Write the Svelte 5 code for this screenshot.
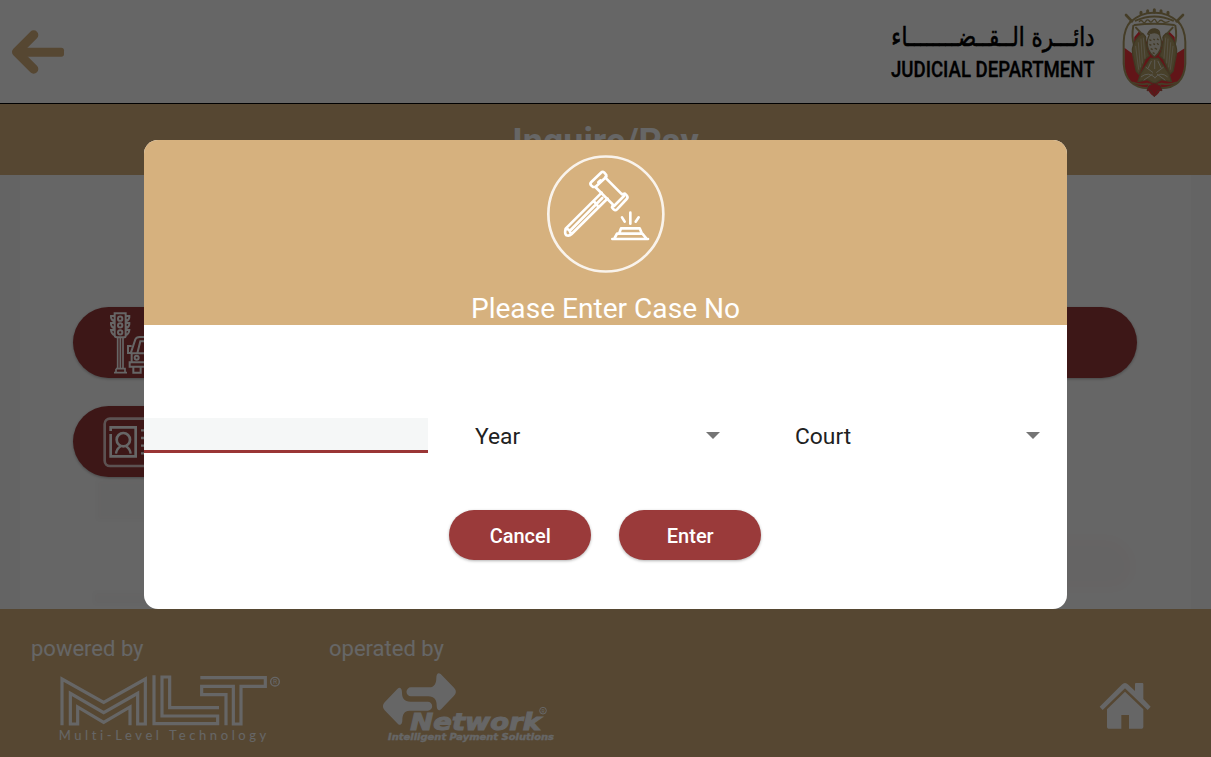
<script>
  let caseNo = $state('');
</script>

<div class="screen">
  <header class="top">
    <svg class="back" viewBox="30 85 170 145" aria-label="Back">
      <path d="M101 106 L50 157 L101 208" fill="none" stroke="#d6b17e" stroke-width="28" stroke-linecap="round" stroke-linejoin="round" />
      <path d="M54 144 H184 Q192 144 192 152 V163 Q192 171 184 171 H54Z" fill="#d6b17e" />
    </svg>
    <div class="brand">
      <svg class="wordmark" viewBox="50 60 640 185">
        <text class="ar" transform="translate(0 138) scale(1 1.180)" x="368" y="0" text-anchor="middle" direction="rtl" textLength="610" lengthAdjust="spacingAndGlyphs">دائـــرة الــقــضــــــــاء</text>
        <text class="en" x="62" y="230" textLength="611" lengthAdjust="spacingAndGlyphs">JUDICIAL DEPARTMENT</text>
      </svg>
      <svg class="emblem" viewBox="750 20 205 275">
        <path d="M762 80 V190 C764 238 790 264 825 266 L834 264 Q834 280 853 290 Q872 280 874 264 L884 266 C920 262 943 236 945 190 V80 Q925 42 853 40 Q782 42 762 80Z" fill="#fff" />
        <path d="M763 142 L790 162 L793 110 L808 92 L835 124 H872 L896 92 L914 110 L918 160 L944 144 V192 C942 238 918 260 886 262 L872 264 Q870 280 853 289 Q836 280 834 264 L820 262 C786 258 766 234 763 192Z" fill="#f4363e" />
        <path d="M800 80 L853 68 L906 80 L876 124 H830Z" fill="#fff" />
        <g fill="none" stroke="#ad9a63" stroke-width="6" stroke-linecap="round" stroke-linejoin="round">
          <path d="M783 62 Q762 84 761 125 V190 C764 240 792 263 833 264 L840 252 M923 62 Q945 84 946 125 V190 C943 240 916 263 873 264 L866 252" />
          <path d="M768 44 L786 63 M939 44 L920 63" stroke-width="8" />
          <path d="M780 66 Q812 36 853 37 Q894 36 926 66 M794 74 Q853 66 912 74 M797 61 Q853 36 909 61" />
          <path d="M813 36 v5 M833 31 v5 M853 28 v8 M873 31 v5 M894 36 v5" stroke-width="9" />
          <path d="M808 64 q5 -7 10 0 t10 -2 q5 -7 10 0 t10 -1 q6 -8 10 1 t10 0 q5 -5 11 1 t18 0" stroke-width="4" />
          <path d="M790 76 Q784 110 792 134 M916 76 Q922 110 914 134 M798 82 L826 112 M908 82 L880 112" />
        </g>
        <g fill="#b3a06a" stroke="#a08c59" stroke-width="4" stroke-linejoin="round">
          <path d="M826 108 L818 99 Q804 106 792 128 Q785 145 788 162 L799 213 L807 222 L826 176 L838 166 Q828 148 826 108Z" />
          <path d="M880 108 L889 99 Q903 106 914 128 Q922 145 919 162 L909 213 L900 222 L880 176 L869 166 Q879 148 880 108Z" />
          <path d="M842 174 H865 L897 220 L904 244 L874 238 L854 250 L832 238 L804 244 L812 220Z" />
        </g>
        <path d="M833 101 Q840 85 855 86 Q870 88 869 103 L874 121 Q878 151 853 170 Q828 150 832 120 L838 103Z" fill="#e4dfce" stroke="#a08c59" stroke-width="4" />
        <path d="M834 99 Q842 84 857 86 Q869 90 868 105 Q857 95 843 101Z" fill="#a08c59" />
        <g fill="none" stroke="#e4dfce" stroke-width="3" stroke-linecap="round">
          <path d="M797 138 L806 207 M805 127 L811 200 M813 116 L817 188 M820 113 L825 174 M909 138 L901 207 M902 127 L896 200 M894 116 L890 188 M887 113 L882 174" opacity=".65" />
          <path d="M828 201 L848 216 M880 201 L860 216 M814 229 Q836 212 855 232 M892 229 Q872 212 855 232 M822 239 L847 222 M885 239 L862 222 M844 183 L835 202 M864 183 L873 202 M854 180 V205" />
        </g>
        <path d="M838 118 l6 3 m6 -5 l5 3 m6 -4 l5 4 M838 132 l6 3 m6 -5 l5 3 m6 -4 l5 4 M842 145 l6 3 m6 -5 l7 4 M848 157 l6 3" fill="none" stroke="#a08c59" stroke-width="4" />
        <path d="M787 246 Q810 255 832 250 Q853 258 875 250 Q898 255 920 246" fill="none" stroke="#ad9a63" stroke-width="5" />
        <path d="M836 257 L853 249 L871 257 L876 271 L863 270 L853 289 L844 271 L831 271Z" fill="#ee343c" stroke="#b45a47" stroke-width="3" />
      </svg>
    </div>
  </header>

  <div class="title-band">Inquire/Pay</div>

  <main>
    <div class="panel">
      <div class="services">
        <div class="service">
          <svg class="traffic" viewBox="320 60 180 195" fill="none" stroke="#fff" stroke-width="6">
            <path d="M343 70 H376 V138 Q376 142 370 142 H350 Q343 142 343 136Z M343 78 H332 Q331 90 343 94 M343 99 H332 Q331 111 343 115 M343 120 H332 Q333 132 343 136 M376 78 H387 Q388 90 376 94 M376 99 H387 Q388 111 376 115 M376 120 H387 Q386 132 376 136" />
            <circle cx="359.500" cy="86" r="6.500" /><circle cx="359.500" cy="106" r="6.500" /><circle cx="359.500" cy="127" r="6.500" />
            <path d="M352 142 V235 M360 142 V235 M368 142 V235 M347 236 H374 V245 M347 236 V245 M341 248 H380" stroke-width="5" />
            <path d="M391 190 L405 148 Q408 141 418 141 H460 Q468 141 472 148 L487 190 M411 190 L420 154 H458 L468 190 M394 168 H383 V189 H394 M484 168 H495 V189 H484 M394 190 H484 V217 H394Z M388 217 H490 V230 H388Z M399 230 V248 H421 V230 M456 230 V248 H479 V230" />
            <circle cx="409" cy="203" r="6" /><circle cx="468" cy="203" r="6" />
          </svg>
        </div>
        <div class="service"></div>
        <div class="service">
          <svg class="idcard" viewBox="300 375 200 165" fill="none" stroke="#fff">
            <rect x="314" y="386" width="178" height="142" rx="16" stroke-width="8" opacity=".75" />
            <path d="M332 423 V412 H407 V499 H332 V432" stroke-width="8" />
            <circle cx="370" cy="449" r="20" stroke-width="8" />
            <path d="M348 491 Q350 476 362 469 M392 491 Q390 476 378 469 M423 421 H470 M423 444 H470 M423 467 H470 M423 490 H470" stroke-width="7" />
          </svg>
        </div>
      </div>
      <span class="ghost one"></span>
      <span class="ghost two"></span>
      <span class="ghost three"></span>
    </div>
  </main>

  <footer>
    <div class="credit powered">
      <span>powered by</span>
      <svg class="mlt" viewBox="170 215 690 220" fill="none" stroke="#fff">
        <g stroke-width="9.500">
          <path d="M188 375 V236 L313 306 L438 236 V371 H415 V279 L313 337 L213 279 V371 H235 V320 L313 366 L392 320 V375" />
          <path d="M464 225 V370 H655 V347 H488 V230 H511 V322 H659" />
          <path d="M603 232 H798 V258 H725 V371 H702 V258 H607 V283 H680 V375" />
        </g>
        <circle cx="827" cy="244" r="13" stroke-width="4" />
        <text x="827" y="251" font-size="20" text-anchor="middle" class="fill">R</text>
        <text x="178" y="418" font-size="39" textLength="623" class="fill geo">Multi-Level Technology</text>
      </svg>
    </div>
    <div class="credit operated">
      <span>operated by</span>
      <svg class="network" viewBox="210 215 530 220" fill="#fff">
        <path id="arrow" d="M303 264 H358 C373 264 379 252 379 236 C379 223 385 218 392 224 L432 265 Q443 277 432 289 L394 329 C385 338 380 330 380 318 C380 302 373 291 355 291 H303 A13.500 13.500 0 0 1 303 264Z" />
        <use href="#arrow" transform="rotate(180 328 299)" />
        <text x="301" y="393" font-size="69" textLength="392" lengthAdjust="spacingAndGlyphs" class="net">Network</text>
        <text x="234" y="423" font-size="25" textLength="498" lengthAdjust="spacingAndGlyphs" class="tag">Intelligent Payment Solutions</text>
        <circle cx="699" cy="334" r="10" fill="none" stroke="#fff" stroke-width="3" />
        <text x="699" y="340" font-size="15" text-anchor="middle" class="reg">R</text>
      </svg>
    </div>
    <svg class="home" viewBox="175 270 165 155" fill="#fff" aria-label="Home">
      <path d="M256 305 L311 358 V411 Q311 416 306 416 H268 V375 H245 V416 H207 Q202 416 202 411 V358Z" />
      <path d="M180 350 L246 284 Q256 274 266 284 L286 303 V282 Q286 279 289 279 H308 Q311 279 311 282 V327 L333 350 L324 360 L256 295 L189 360Z" />
    </svg>
  </footer>

  <div class="overlay">
    <section class="dialog">
      <div class="dialog-head">
        <svg class="gavel" viewBox="137 129 360 366" fill="none" stroke="#fff" stroke-linecap="round" stroke-linejoin="round">
          <circle cx="316.500" cy="312" r="172.500" stroke-width="8" opacity=".85" />
          <g stroke-width="8">
            <path d="M302 188 Q307 183 312 188 L318 195 L315 203 L365 253 L374 251 L379 256 Q384 262 379 267 L350 298 Q345 303 340 298 L335 292 L338 284 L285 231 L278 231 L272 226 Q268 221 273 216Z" />
            <path d="M318 200 L286 230 M371 258 L341 288 M301 211 L294 217" />
            <path d="M296 256 L196 356 Q192 371 198 376 Q207 379 214 372 L314 273 M306 264 L211 360 M281 274 L291 286 M296 256 L304 248 M314 273 L322 266 M197 357 Q207 356 211 370" />
            <path d="M336 387 H443 M343 384 L350 371 H426 L437 384 M357 369 L362 355 H418 L424 369 M368 371 H398 M411 371 H418" />
            <path d="M390 308 V341 M365 322 L373 335 M415 322 L406 335" />
          </g>
        </svg>
        <h1>Please Enter Case No</h1>
      </div>
      <div class="fields">
        <input bind:value={caseNo} aria-label="Case number" />
        <div class="select"><span>Year</span><i></i></div>
        <div class="select"><span>Court</span><i></i></div>
      </div>
      <div class="actions">
        <button>Cancel</button>
        <button>Enter</button>
      </div>
    </section>
  </div>
</div>

<style>
  :global(body) { margin: 0; overflow: hidden; }
  * { box-sizing: border-box; }
  .screen {
    position: relative; width: 1211px; height: 757px; overflow: hidden;
    display: flex; flex-direction: column; background: #fff;
    font-family: Roboto, sans-serif;
  }
  svg { display: block; flex: none; overflow: visible; }
  .top {
    height: 104px; flex: none; border-bottom: 1px solid #000;
    display: flex; align-items: flex-start; justify-content: space-between;
    padding: 0 22.700px 0 10px;
  }
  .back { width: 56.667px; height: 48.333px; margin-top: 28.333px; }
  .brand { display: flex; align-items: flex-start; gap: 20px; }
  .wordmark { width: 213.333px; height: 61.667px; margin-top: 20px; }
  .ar { font: 68px "DejaVu Sans", sans-serif; fill: #000; stroke: #000; stroke-width: 1.500px; }
  .en { font: 500 66px Roboto, sans-serif; fill: #000; stroke: #000; stroke-width: 1px; }
  .emblem { width: 68.333px; height: 91.667px; margin-top: 6.667px; }
  .title-band {
    height: 71px; flex: none; background: #d6b17e; color: #fff; padding-top: 3px;
    text-align: center; font-size: 36px; font-weight: 700; line-height: 71px;
  }
  main { flex: 1; background: #fafafa; padding: 0 20px; }
  .panel { position: relative; height: 100%; background: #fff; padding: 131.500px 54px 0 53px; }
  .services { display: grid; grid-template-columns: 1fr 1fr; gap: 28px; }
  .service {
    height: 71px; border-radius: 36px; background: #9a3a3a;
    box-shadow: 0 1px 3px rgba(0, 0, 0, .3); overflow: hidden;
  }
  .traffic { width: 60px; height: 65px; margin: 3px 0 0 33.700px; }
  .idcard { width: 66.667px; height: 55px; margin: 9px 0 0 27px; }
  .ghost { position: absolute; opacity: .02; background: #604848; filter: blur(2px); }
  .one { left: 76px; top: 304px; width: 90px; height: 42px; }
  .two { left: 73px; top: 416px; width: 90px; height: 14px; }
  .three { left: 1000px; top: 361px; width: 115px; height: 55px; background: #c44; border-radius: 0 50px 40px 0; filter: blur(4px); }
  footer {
    height: 148.500px; flex: none; background: #d6b17e; color: #fff;
    display: flex; align-items: flex-start; padding-left: 31px;
  }
  .credit { font-size: 22px; line-height: 26px; padding-top: 27px; }
  .powered { width: 298px; }
  .operated { flex: 1; }
  .mlt { width: 230px; height: 73.333px; margin: 10px 0 0 25.400px; }
  .network { width: 176.667px; height: 73.333px; margin: 9.500px 0 0 50.700px; }
  .fill, .reg { fill: #fff; stroke: none; }
  .geo { font-family: Lato, sans-serif; font-variant-ligatures: none; }
  .net, .tag { font-family: "DejaVu Sans", sans-serif; font-weight: 700; font-style: italic; }
  .net { stroke: #fff; stroke-width: 3px; }
  .tag { stroke: #fff; stroke-width: 1px; }
  .home { width: 55px; height: 51.667px; margin: 71.300px 57.700px 0 0; }
  .overlay {
    position: absolute; inset: 0; background: rgba(0, 0, 0, .6);
    display: flex; align-items: flex-start; justify-content: center; padding-top: 140px;
  }
  .dialog { width: 923px; height: 469px; border-radius: 14px; overflow: hidden; background: #fff; }
  .dialog-head {
    height: 185.400px; background: #d6b17e; color: #fff;
    display: flex; flex-direction: column; align-items: center; padding-top: 13px;
  }
  .gavel { width: 120px; height: 122px; }
  h1 { margin: 17px 0 0; font-size: 28.100px; line-height: 34px; font-weight: 400; white-space: nowrap; }
  .fields { display: flex; margin-top: 92.600px; height: 36px; }
  input {
    width: 284px; height: 35.500px; border: 0; border-bottom: 3px solid #9a3535;
    border-radius: 0; background: #f5f7f7; outline: 0; padding: 0 10px; font: 23px Roboto, sans-serif;
  }
  .select {
    width: 246px; margin-left: 47px; display: flex; align-items: center;
    justify-content: space-between; font-size: 22.800px; color: #212121;
  }
  .select span { padding-top: 2px; }
  .select i { border: 7px solid transparent; border-top-color: #757575; border-bottom: 0; margin-right: 1px; }
  .select + .select { margin-left: 74px; }
  .actions { display: flex; justify-content: center; gap: 28px; margin-top: 56px; }
  .actions { padding-right: .500px; }
  button {
    width: 142px; height: 50px; border: 0; border-radius: 25px; padding: 3px 0 0;
    background: #9a3a3a; color: #fff; font: 500 20px Roboto, sans-serif;
    box-shadow: 0 1px 3px rgba(0, 0, 0, .3);
  }
</style>
